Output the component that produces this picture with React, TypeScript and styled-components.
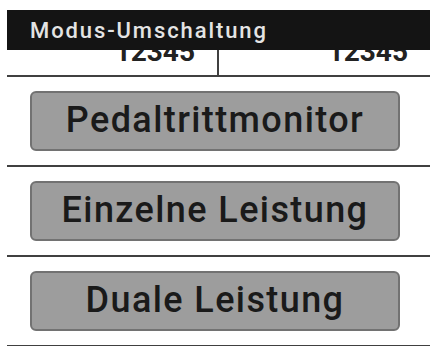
import React from 'react';
import styled, { createGlobalStyle } from 'styled-components';

const GlobalStyle = createGlobalStyle`
  html, body {
    margin: 0;
    padding: 0;
    background: #ffffff;
  }
  body {
    font-family: Roboto, "Liberation Sans", sans-serif;
  }
`;

const Screen = styled.div`
  position: relative;
  width: 434px;
  height: 346px;
  overflow: hidden;
  background: #ffffff;
  padding: 0 4px 0 7px;
  box-sizing: border-box;
`;

// the title bar lies over the top of the value row
const TitleBar = styled.div`
  position: absolute;
  top: 10px;
  left: 7px;
  right: 4px;
  height: 40px;
  background: #141414;
  color: #e4e4e4;
  font-size: 22px;
  font-weight: 500;
  line-height: 41px;
  padding-left: 23px;
  letter-spacing: 1.9px;
  z-index: 2;
`;

const ValueRow = styled.div`
  display: grid;
  grid-template-columns: 211px 1fr;
  height: 77px;
  border-bottom: 2px solid #404040;
  box-sizing: border-box;
`;

const ValueCell = styled.div<{ $divider?: boolean }>`
  display: flex;
  align-items: flex-end;
  justify-content: flex-end;
  padding-right: ${p => (p.$divider ? '23px' : '22px')};
  padding-bottom: 12px;
  font-size: 28px;
  font-weight: 700;
  line-height: 22px;
  color: #222;
  position: relative;
  ${p =>
    p.$divider &&
    `
    &::after {
      content: '';
      position: absolute;
      right: -1px;
      top: 48px;
      bottom: 0;
      width: 2px;
      background: #404040;
    }
  `}
`;

const ModeRow = styled.div`
  height: 90px;
  padding: 14px 0 0 23px;
  border-bottom: 2px solid #404040;
  box-sizing: border-box;
`;

const ModeButton = styled.button`
  display: flex;
  align-items: center;
  justify-content: center;
  width: 370px;
  height: 60px;
  padding: 0 0 2px;
  background: #9d9d9d;
  border: 2px solid #727272;
  border-radius: 6px;
  font-family: Roboto, "Liberation Sans", sans-serif;
  font-size: 36px;
  font-weight: 500;
  letter-spacing: 1.4px;
  color: #1a1a1a;
  cursor: pointer;
`;

const modes = ['Pedaltrittmonitor', 'Einzelne Leistung', 'Duale Leistung'];

export default function App() {
  return (
    <>
      <GlobalStyle />
      <Screen>
        <TitleBar>Modus-Umschaltung</TitleBar>
        <ValueRow>
          <ValueCell $divider>12345</ValueCell>
          <ValueCell>12345</ValueCell>
        </ValueRow>
        {modes.map(m => (
          <ModeRow key={m}>
            <ModeButton>{m}</ModeButton>
          </ModeRow>
        ))}
      </Screen>
    </>
  );
}
